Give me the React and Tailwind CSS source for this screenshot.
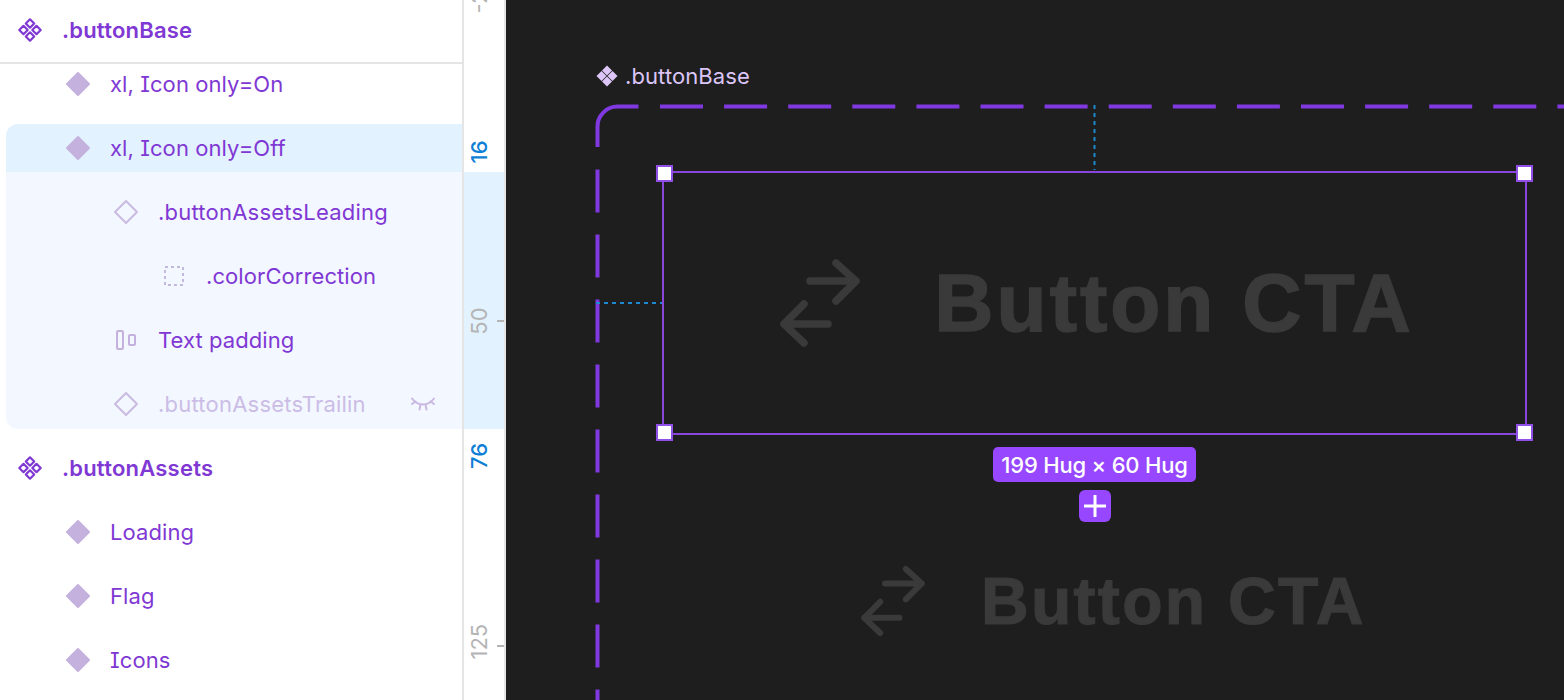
import React from "react";

const ComponentSetIcon = () => (
  <svg width="26" height="26" viewBox="0 0 26 26" fill="none" stroke="#8038d4" strokeWidth="2.200" strokeLinejoin="round">
    <path d="M13 2.300l4.200 4.200-4.200 4.200-4.200-4.200z" />
    <path d="M13 15.300l4.200 4.200-4.200 4.200-4.200-4.200z" />
    <path d="M6.500 8.800l4.200 4.200-4.200 4.200-4.200-4.200z" />
    <path d="M19.500 8.800l4.200 4.200-4.200 4.200-4.200-4.200z" />
  </svg>
);

const FilledDiamond = () => (
  <svg width="26" height="26" viewBox="0 0 26 26" fill="#c4b1dd" stroke="#c4b1dd" strokeWidth="2" strokeLinejoin="round">
    <path d="M13 2l11 11-11 11L2 13z" />
  </svg>
);

const OutlineDiamond = () => (
  <svg width="26" height="26" viewBox="0 0 26 26" fill="none" stroke="#c9bbe2" strokeWidth="2" strokeLinejoin="round">
    <path d="M13 2l11 11-11 11L2 13z" />
  </svg>
);

const DashedSquare = () => (
  <svg width="22" height="22" viewBox="0 0 22 22" fill="none" stroke="#c4b8dc" strokeWidth="2">
    <rect x="2" y="2" width="18" height="18" strokeDasharray="3 3" />
  </svg>
);

const PaddingIcon = () => (
  <svg width="22" height="22" viewBox="0 0 22 22" fill="none" stroke="#c4b1dd" strokeWidth="2">
    <rect x="2" y="2" width="6" height="18" rx="1" />
    <rect x="14" y="6" width="6" height="10" rx="1" />
  </svg>
);

const ClosedEye = () => (
  <svg width="26" height="16" viewBox="0 0 26 16" fill="none" stroke="#c9b8e2" strokeWidth="2" strokeLinecap="round">
    <path d="M2 2.500c6 8 16 8 22 0" />
    <path d="M2 8l3.500-2.500M24 8l-3.500-2.500M9.500 13.500l.8-4M16.500 13.500l-.8-4" />
  </svg>
);

const Row = ({ pad, icon, label, muted, bold, trailing, wide, height = "h-12" }) => (
  <div className={`flex items-center ${height} ${pad}`}>
    <span className="flex w-8 shrink-0 items-center justify-center">{icon}</span>
    <span
      className={`ml-4 whitespace-nowrap text-[22px] leading-none ${wide ? "tracking-[0.22px]" : "tracking-[0.08px]"} ${
        bold ? "font-semibold" : "font-normal"
      } ${muted ? "text-[#cbbde6]" : "text-[#8038d4]"}`}
    >
      {label}
    </span>
    {trailing}
  </div>
);

const SwapArrows = ({ width, height, stroke }) => (
  <svg width={width} height={height} viewBox="0 0 80 88" fill="none" stroke="#3a3a3a" strokeWidth={stroke} strokeLinecap="round" strokeLinejoin="round">
    <path d="M30 22h46M56 4l20 18-20 20" />
    <path d="M48 65H4M24 45L4 65l20 19" />
  </svg>
);

const Handle = ({ pos }) => (
  <span className={`absolute h-[17px] w-[17px] border-[2.500px] border-[#9050e8] bg-white ${pos}`} />
);

const RulerMark = ({ pos, text, color = "text-[#b4b4b4]", weight = "font-normal" }) => (
  <span
    className={`absolute left-0 w-[29px] -rotate-90 whitespace-nowrap text-center text-[22px] leading-none ${color} ${weight} ${pos}`}
  >
    {text}
  </span>
);

export default function App() {
  return (
    <div className="flex h-[700px] w-[1564px] overflow-hidden bg-white font-['Inter',sans-serif] [font-feature-settings:'cv08']">
      <aside className="h-full w-[464px] shrink-0 overflow-hidden border-r-2 border-[#e5e5e5] bg-white">
        <div className="flex h-16 items-center border-b-2 border-[#e5e5e5] pb-[2px] pl-[14px]">
          <span className="flex w-8 shrink-0 items-center justify-center">
            <ComponentSetIcon />
          </span>
          <span className="ml-4 text-[22px] font-semibold leading-none tracking-[0.22px] text-[#8038d4]">.buttonBase</span>
        </div>
        <Row pad="pl-[62px]" height="h-10" icon={<FilledDiamond />} label="xl, Icon only=On" />
        <div className="ml-[6px] mt-5 overflow-hidden rounded-l-[12px] bg-[#f3f7ff] pb-px">
          <div className="bg-[#e2f2fe]">
            <Row pad="pl-[56px]" icon={<FilledDiamond />} label="xl, Icon only=Off" />
          </div>
          <div className="flex flex-col gap-4 pt-4">
            <Row pad="pl-[104px]" wide icon={<OutlineDiamond />} label=".buttonAssetsLeading" />
            <Row pad="pl-[152px]" icon={<DashedSquare />} label=".colorCorrection" />
            <Row pad="pl-[104px]" icon={<PaddingIcon />} label="Text padding" />
            <Row
              pad="pl-[104px]"
              muted
              wide
              icon={<OutlineDiamond />}
              label=".buttonAssetsTrailin"
              trailing={
                <span className="ml-[44px] flex items-center">
                  <ClosedEye />
                </span>
              }
            />
          </div>
        </div>
        <div className="mt-[15px] flex flex-col gap-4 pl-[14px]">
          <Row pad="" bold wide icon={<ComponentSetIcon />} label=".buttonAssets" />
          <Row pad="pl-[48px]" icon={<FilledDiamond />} label="Loading" />
          <Row pad="pl-[48px]" icon={<FilledDiamond />} label="Flag" />
          <Row pad="pl-[48px]" icon={<FilledDiamond />} label="Icons" />
        </div>
      </aside>

      <div className="relative h-full w-[42px] shrink-0 border-r-2 border-[#e5e5e5] bg-white">
        <div className="mt-[172px] h-[257px] bg-[#e2f2fe]" />
        <RulerMark pos="-top-[12px]" text="-25" />
        <RulerMark pos="top-[141px]" text="16" color="text-[#0f7fd6]" weight="font-medium" />
        <RulerMark pos="top-[310px]" text="50" />
        <span className="absolute left-[33px] top-[320px] h-[2px] w-[7px] bg-[#b4b4b4]" />
        <RulerMark pos="top-[445px]" text="76" color="text-[#0f7fd6]" weight="font-medium" />
        <RulerMark pos="top-[634px]" text="125" />
        <span className="absolute left-[33px] top-[645px] h-[2px] w-[7px] bg-[#b4b4b4]" />
      </div>

      <main className="relative h-full min-w-0 flex-1 overflow-hidden bg-[#1e1e1e]">
        <svg className="absolute inset-0" width="1058" height="700" viewBox="506 0 1058 700" fill="none">
          <g stroke="#8038e0" strokeWidth="4">
            <path d="M597.500 147V127a20 20 0 0 1 20-20.500H638.500" />
            <path d="M660 106.500H1564" strokeDasharray="43 21.100" />
            <path d="M597.500 169.500V700" strokeDasharray="43 22" />
          </g>
          <g stroke="#1b8ad0" strokeWidth="2" strokeDasharray="4 4">
            <path d="M1094.500 105V170" />
            <path d="M596 303H662" />
          </g>
        </svg>

        <div className="absolute left-[90px] top-[65px] flex items-center">
          <svg width="22" height="22" viewBox="0 0 22 22" fill="#dcc6f7">
            <path d="M11 0.500l5 5-5 5-5-5z" />
            <path d="M11 11.500l5 5-5 5-5-5z" />
            <path d="M5.500 6l5 5-5 5-5-5z" />
            <path d="M16.500 6l5 5-5 5-5-5z" />
          </svg>
          <span className="ml-[7px] text-[22px] leading-[22px] tracking-[0.1px] text-[#dcc6f7]">.buttonBase</span>
        </div>

        <div className="absolute left-[156px] top-[171px] flex h-[264px] w-[865px] items-center justify-center gap-[74px] border-2 border-[#8a45dc] pl-[5px]">
          <SwapArrows width="80" height="88" stroke="7.500" />
          <span className="whitespace-nowrap font-['Liberation_Sans',sans-serif] text-[82px] font-bold leading-none tracking-[3px] text-[#3a3a3a] [-webkit-text-stroke:1.500px_#3a3a3a]">Button CTA</span>
          <Handle pos="-left-[8px] -top-[8px]" />
          <Handle pos="-right-[8px] -top-[8px]" />
          <Handle pos="-left-[8px] -bottom-[8px]" />
          <Handle pos="-right-[8px] -bottom-[8px]" />
        </div>

        <div className="absolute left-[487px] top-[447px] flex h-[35px] w-[203px] items-center justify-center rounded-[5px] bg-[#9747ff] text-[22px] font-medium leading-none tracking-[-0.2px] text-white">
          199 Hug × 60 Hug
        </div>
        <div className="absolute left-[573px] top-[490px] flex h-[32px] w-[32px] items-center justify-center rounded-[6px] bg-[#9747ff]">
          <svg width="24" height="24" viewBox="0 0 24 24" fill="none" stroke="#fff" strokeWidth="3">
            <path d="M12 1v22M1 12h22" />
          </svg>
        </div>

        <div className="absolute left-[355px] top-[565px] flex items-center gap-[56px]">
          <SwapArrows width="64" height="72" stroke="7.500" />
          <span className="whitespace-nowrap font-['Liberation_Sans',sans-serif] text-[66px] font-bold leading-none tracking-[2.300px] text-[#3a3a3a] [-webkit-text-stroke:1.200px_#3a3a3a]">Button CTA</span>
        </div>
      </main>
    </div>
  );
}
